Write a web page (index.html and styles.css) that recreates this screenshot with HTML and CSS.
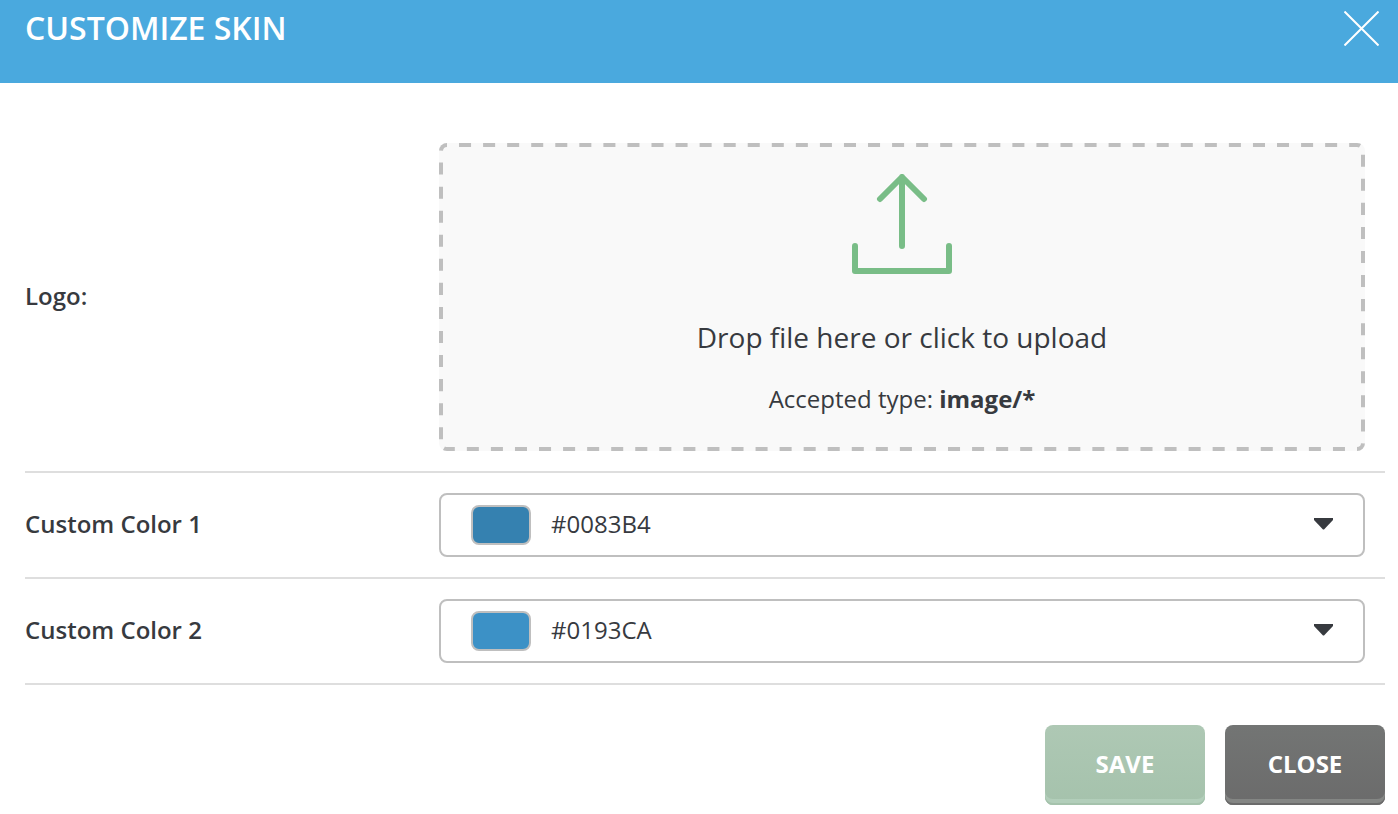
FILE: index.html
```html
<!DOCTYPE html>
<html lang="en">
<head>
    <meta charset="UTF-8">
    <meta name="viewport" content="width=device-width, initial-scale=1.0">
    <title>Customize Skin</title>
    <link rel="stylesheet" href="styles.css">
</head>
<body>
    <!-- Header -->
    <header class="header">
        <h1>CUSTOMIZE SKIN</h1>
        <button type="button" class="dismiss" aria-label="Dismiss">
            <svg width="35" height="35" viewBox="0 0 35 35" fill="none" stroke="#fff" stroke-width="2">
                <path d="M0.5 0.5L34.5 34.5M34.5 0.5L0.5 34.5"/>
            </svg>
        </button>
    </header>

    <form class="skin-form">
        <!-- Logo upload -->
        <div class="row">
            <label class="row-label" for="logo">Logo:</label>
            <label class="dropzone">
                <svg class="dashes" width="100%" height="100%">
                    <rect width="100%" height="100%" rx="8" pathLength="2448"/>
                </svg>
                <input type="file" id="logo" accept="image/*">
                <svg width="100" height="100" viewBox="0 0 100 100" fill="none" stroke="#79bd87" stroke-width="6" stroke-linecap="round" stroke-linejoin="round">
                    <path d="M50 72V3M28 25L50 3L72 25"/>
                    <path d="M3 72V97H97V72"/>
                </svg>
                <span class="drop-title">Drop file here or click to upload</span>
                <span class="drop-type">Accepted type: <b>image/*</b></span>
            </label>
        </div>

        <!-- Colors -->
        <div class="row">
            <label class="row-label" for="color1">Custom Color 1</label>
            <div class="color-select">
                <span class="swatch swatch-1"></span>
                <select id="color1">
                    <option>#0083B4</option>
                </select>
                <svg class="caret" width="20" height="12" viewBox="0 0 20 12">
                    <path d="M1 0H20V2L11.5 11Q10.5 12 9.5 11L1 2Z" fill="#373a3f"/>
                </svg>
            </div>
        </div>
        <div class="row">
            <label class="row-label" for="color2">Custom Color 2</label>
            <div class="color-select">
                <span class="swatch swatch-2"></span>
                <select id="color2">
                    <option>#0193CA</option>
                </select>
                <svg class="caret" width="20" height="12" viewBox="0 0 20 12">
                    <path d="M1 0H20V2L11.5 11Q10.5 12 9.5 11L1 2Z" fill="#373a3f"/>
                </svg>
            </div>
        </div>

        <!-- Actions -->
        <div class="actions">
            <button type="submit" class="btn btn-save">SAVE</button>
            <button type="button" class="btn btn-close">CLOSE</button>
        </div>
    </form>
</body>
</html>
```
FILE: styles.css
```css
* {
    margin: 0;
    padding: 0;
    box-sizing: border-box;
}

body {
    font-family: "Open Sans", sans-serif;
    font-size: 24px;
    background-color: #fff;
    color: #373a3f;
}

/* Header */
.header {
    display: flex;
    justify-content: space-between;
    align-items: flex-start;
    padding: 6px 19px 33px 25px;
    background-color: #4aa9de;
    color: #fff;
}

.header h1 {
    font-size: 32px;
    line-height: 44px;
    font-weight: 600;
}

.dismiss {
    display: flex;
    margin-top: 5px;
    border: none;
    background: none;
    cursor: pointer;
}

/* Form rows */
.skin-form {
    padding: 40px 13px 9px 25px;
}

.row {
    display: grid;
    grid-template-columns: 414px 1fr;
    align-items: center;
    padding: 20px 20px 20px 0;
    border-bottom: 2px solid #dedede;
}

.row-label {
    padding-bottom: 4px;
    font-weight: 600;
}

/* Dropzone */
.dropzone {
    position: relative;
    display: flex;
    flex-direction: column;
    align-items: center;
    padding: 31px 24px 34px;
    background-color: #f9f9f9;
    border-radius: 8px;
    overflow: hidden;
    cursor: pointer;
}

.dropzone input {
    position: absolute;
    width: 1px;
    height: 1px;
    opacity: 0;
}

/* Dashed outline, the outer half of the stroke is clipped */
.dashes {
    position: absolute;
    top: 0;
    left: 0;
    fill: none;
    stroke: #bfbfbf;
    stroke-width: 8;
    stroke-dasharray: 12;
    stroke-dashoffset: 12;
}

.drop-title {
    margin-top: 43px;
    font-size: 28px;
    line-height: 40px;
}

.drop-type {
    margin-top: 24px;
    line-height: 36px;
}

/* Color select */
.color-select {
    display: flex;
    align-items: center;
    height: 64px;
    padding: 0 30px;
    border: 2px solid #bfbfbf;
    border-radius: 8px;
}

.swatch {
    width: 60px;
    height: 40px;
    margin-right: 20px;
    border: 2px solid #bfbfbf;
    border-radius: 8px;
}

.swatch-1 {
    background-color: #3581b0;
}

.swatch-2 {
    background-color: #3c91c6;
}

.color-select select {
    flex: 1;
    height: 60px;
    padding-bottom: 4px;
    border: none;
    background: none;
    appearance: none;
    font: inherit;
    color: inherit;
    cursor: pointer;
}

.caret {
    margin-bottom: 2px;
    pointer-events: none;
}

/* Buttons */
.actions {
    display: flex;
    justify-content: flex-end;
    gap: 20px;
    padding-top: 40px;
}

.btn {
    width: 160px;
    height: 80px;
    padding-bottom: 4px;
    border: none;
    border-radius: 8px;
    font: inherit;
    font-weight: 700;
    color: #fff;
    cursor: pointer;
}

.btn-save {
    background: linear-gradient(#aec8b4, #a5c2ac);
    box-shadow: inset 0 -2px #a5c2ac, inset 0 -6px #b2ceba;
}

.btn-close {
    background: linear-gradient(#737574, #6b6b6b);
    box-shadow: inset 0 -2px #6b6b6b, inset 0 -6px #848684;
}
```
